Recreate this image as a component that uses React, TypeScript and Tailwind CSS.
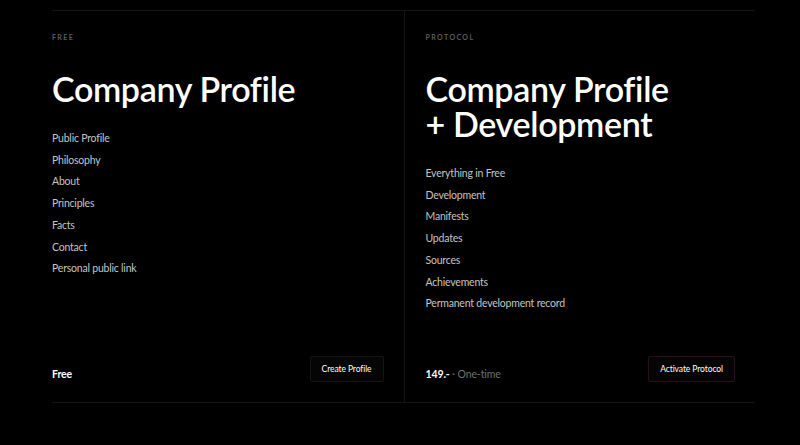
import React from 'react'

type Plan = {
  label: string
  title: string[]
  features: string[]
  price: React.ReactNode
  action: string
  accent?: boolean
}

const plans: Plan[] = [
  {
    label: 'Free',
    title: ['Company Profile'],
    features: [
      'Public Profile',
      'Philosophy',
      'About',
      'Principles',
      'Facts',
      'Contact',
      'Personal public link',
    ],
    price: <span className="font-bold text-white">Free</span>,
    action: 'Create Profile',
  },
  {
    label: 'Protocol',
    title: ['Company Profile', '+ Development'],
    features: [
      'Everything in Free',
      'Development',
      'Manifests',
      'Updates',
      'Sources',
      'Achievements',
      'Permanent development record',
    ],
    price: (
      <>
        <span className="font-bold text-white">149.-</span>
        <span className="text-[#6f6f6f]"> · One-time</span>
      </>
    ),
    action: 'Activate Protocol',
    accent: true,
  },
]

const PlanColumn = ({ plan, first }: { plan: Plan, first: boolean }) => (
  <div
    className={`flex flex-col pr-5 pt-[21px] pb-[20px] ${first ? 'pl-0' : 'pl-[21px] border-l border-[#141414]'}`}
  >
    <div className="text-[7px] font-bold uppercase tracking-[0.2em] text-[#5c5c5c] leading-[10px]">
      {plan.label}
    </div>

    <h2 className="mt-[29px] text-[34px] font-semibold leading-[35px] tracking-[-0.01em] text-white">
      {plan.title.map((line) => (
        <div key={line}>{line}</div>
      ))}
    </h2>

    <ul className="mt-[22px] flex flex-col">
      {plan.features.map((f) => (
        <li key={f} className="text-[10.5px] leading-[21.7px] tracking-[-0.02em] text-[#c4c4c4]">
          {f}
        </li>
      ))}
    </ul>

    <div className="mt-auto flex items-end justify-between">
      <div className="text-[10.5px] leading-[14px] pb-[1px] tracking-[-0.01em]">{plan.price}</div>
      <button
        className={`h-[26px] px-[11px] rounded-[2px] text-[8.5px] tracking-[-0.01em] text-white bg-[#050505] border ${plan.accent ? 'border-[#2a0f16]' : 'border-[#151515]'}`}
      >
        {plan.action}
      </button>
    </div>
  </div>
)

export default function App() {
  return (
    <div
      className="w-[800px] h-[445px] bg-black overflow-hidden"
      style={{ fontFamily: 'Lato, "Open Sans", sans-serif' }}
    >
      <div className="ml-[52px] mr-[45px] mt-[10px] h-[393px] grid grid-cols-2 border-t border-b border-[#141414]">
        {plans.map((p, i) => (
          <PlanColumn key={p.label} plan={p} first={i === 0} />
        ))}
      </div>
    </div>
  )
}
